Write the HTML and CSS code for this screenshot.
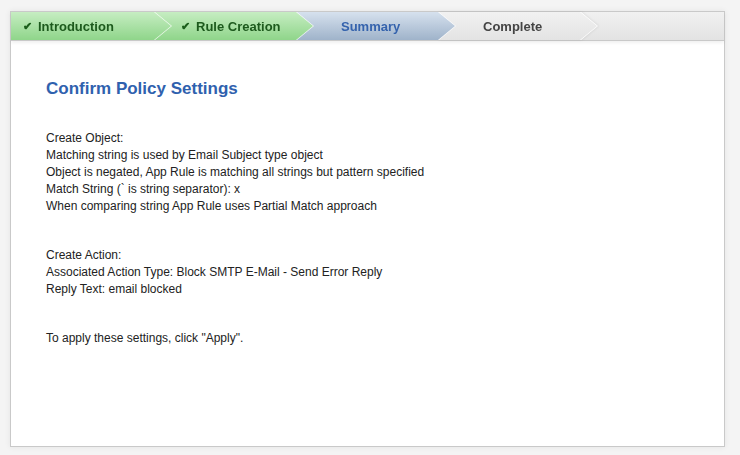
FILE: index.html
```html
<!DOCTYPE html>
<html>
<head>
<meta charset="utf-8">
<link rel="stylesheet" href="styles.css">
</head>
<body>
<div class="panel">
  <div class="steps">
    <div class="step done first"><div class="shape"><span class="check">&#10004;</span>Introduction</div></div>
    <div class="step done"><div class="shape"><span class="check">&#10004;</span>Rule Creation</div></div>
    <div class="step current"><div class="shape">Summary</div></div>
    <div class="step todo"><div class="shape">Complete</div></div>
  </div>
  <div class="content">
    <h1 class="title">Confirm Policy Settings</h1>
    <div class="section">
      <p>Create Object:</p>
      <p>Matching string is used by Email Subject type object</p>
      <p>Object is negated, App Rule is matching all strings but pattern specified</p>
      <p>Match String (` is string separator): x</p>
      <p>When comparing string App Rule uses Partial Match approach</p>
    </div>
    <div class="section">
      <p>Create Action:</p>
      <p>Associated Action Type: Block SMTP E-Mail - Send Error Reply</p>
      <p>Reply Text: email blocked</p>
    </div>
    <div class="section">
      <p>To apply these settings, click "Apply".</p>
    </div>
  </div>
</div>
</body>
</html>
```
FILE: styles.css
```css
html, body {
  margin: 0;
  padding: 0;
  background: #f4f4f4;
}
body {
  padding: 11px 15px 8px 10px;
  font-family: "Liberation Sans", Arial, sans-serif;
}
.panel {
  height: 436px;
  box-sizing: border-box;
  background: #fff;
  border: 1px solid #c9c9c9;
  box-shadow: 0 0 6px rgba(0,0,0,0.07);
}
.steps {
  display: flex;
  height: 28px;
  background: linear-gradient(#f1f1f1, #e3e3e3);
  border-bottom: 1px solid #c9c9c9;
  box-shadow: 0 2px 3px rgba(0,0,0,0.06);
  position: relative;
}
.step {
  width: 159px;
  margin-right: -17px;
  filter: drop-shadow(1px 0 0 rgba(255,255,255,0.85));
  position: relative;
}
.step:nth-child(1) { z-index: 4; width: 160px; }
.step:nth-child(2) { z-index: 3; }
.step:nth-child(3) { z-index: 2; }
.step:nth-child(4) { z-index: 1; }
.shape {
  height: 28px;
  display: flex;
  align-items: center;
  padding-left: 45px;
  font-size: 13px;
  font-weight: bold;
  clip-path: polygon(0 0, calc(100% - 17px) 0, 100% 50%, calc(100% - 17px) 100%, 0 100%);
}
.done .shape {
  background: linear-gradient(#c6edc2, #8fd58a);
  color: #1d5a1d;
  padding-left: 12px;
}
.done:nth-child(2) .shape { padding-left: 27px; }
.check {
  font-size: 11px;
  color: #1b5e1b;
  margin-right: 6px;
}
.current .shape {
  background: linear-gradient(#d6e1ee, #9fb3ca);
  color: #3563ad;
}
.todo .shape {
  background: linear-gradient(#f1f1f1, #e3e3e3);
  color: #444;
}
.todo { filter: drop-shadow(1px 0 0 rgba(255,255,255,1)) drop-shadow(1px 0 1px rgba(0,0,0,0.08)); }
.content {
  padding: 38px 35px 0 35px;
}
.title {
  margin: 0;
  font-size: 17px;
  line-height: 20px;
  font-weight: bold;
  color: #2f61ae;
}
.section {
  margin-top: 32px;
}
.section:first-of-type { margin-top: 31px; }
.section p {
  margin: 0;
  font-size: 12px;
  line-height: 17px;
  color: #222;
}
```
